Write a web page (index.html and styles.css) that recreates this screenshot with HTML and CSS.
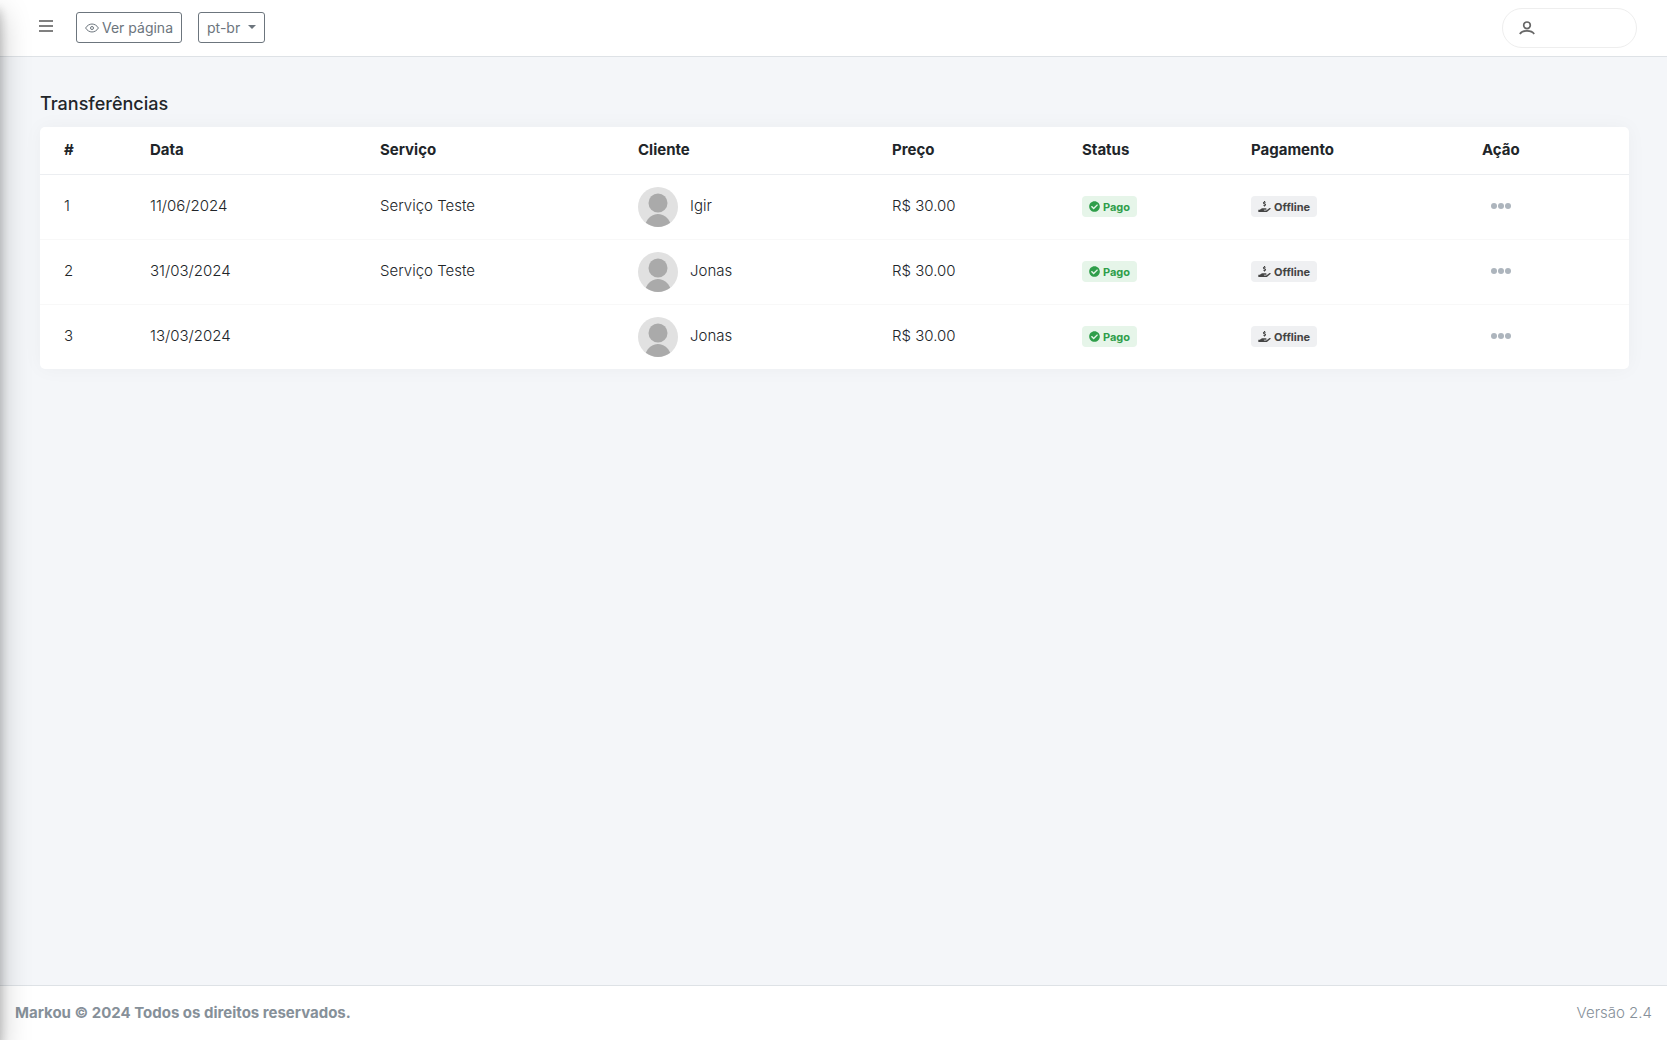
FILE: index.html
```
<!DOCTYPE html>
<html lang="pt-br">
<head>
<meta charset="utf-8">
<meta name="viewport" content="width=device-width, initial-scale=1">
<title>Transferências</title>
<link rel="stylesheet" href="styles.css">
</head>
<body>
<svg class="sprite" aria-hidden="true">
  <symbol id="avatar" viewBox="0 0 40 40">
    <circle cx="20" cy="20" r="20" fill="#e1e1e1"/>
    <circle cx="20" cy="16" r="9.5" fill="#aaa"/>
    <path d="M7.8 35.8C10 30.500 14.500 27 20 27s10 3.500 12.200 8.800A20 20 0 0 1 7.800 35.800z" fill="#aaa"/>
  </symbol>
  <symbol id="check" viewBox="0 0 512 512">
    <path fill="currentColor" d="M504 256c0 137-111 248-248 248S8 393 8 256 119 8 256 8s248 111 248 248zM227.300 387.300l184-184c6.200-6.200 6.200-16.400 0-22.600l-22.600-22.600c-6.200-6.200-16.400-6.200-22.600 0L216 308.100l-70.100-70.100c-6.200-6.200-16.400-6.200-22.600 0l-22.600 22.600c-6.200 6.200-6.200 16.400 0 22.600l104 104c6.200 6.300 16.400 6.300 22.600.1z"/>
  </symbol>
  <symbol id="hand" viewBox="0 0 576 512">
    <path fill="currentColor" d="M257.600 144.300l50 14.300c3.600 1 6.100 4.400 6.100 8.100 0 4.600-3.800 8.400-8.400 8.400h-32.800c-3.600 0-7.100-.8-10.300-2.200-4.800-2.200-10.400-1.700-14.100 2l-17.500 17.500c-5.300 5.300-4.700 14.300 1.500 18.400 9.500 6.300 20.400 10.100 31.800 11.500V240c0 8.800 7.200 16 16 16h16c8.800 0 16-7.200 16-16v-17.600c30.300-3.600 53.300-31 49.300-63-2.900-23-20.700-41.300-42.900-47.700l-50-14.300c-3.600-1-6.100-4.400-6.100-8.100 0-4.600 3.800-8.400 8.400-8.400h32.800c3.600 0 7.100.8 10.300 2.200 4.800 2.200 10.400 1.700 14.100-2l17.500-17.500c5.300-5.300 4.700-14.300-1.500-18.400-9.500-6.300-20.400-10.100-31.800-11.500V16c0-8.800-7.200-16-16-16h-16c-8.800 0-16 7.200-16 16v17.600c-30.300 3.600-53.300 31-49.300 63 2.900 23 20.700 41.300 42.900 47.700zm307.700 184.200c-12.200-10.900-30.900-10-43.700.1L402.800 423.700c-11.400 9.100-25.500 14-40 14H272c-8.800 0-16-7.200-16-16s7.200-16 16-16h78.300c15.900 0 30.700-10.900 33.300-26.600 3.300-20-12.100-37.400-31.600-37.400H192c-27 0-53.100 9.300-74.100 26.300L71.400 405.700H16c-8.800 0-16 7.200-16 16v74.300c0 8.800 7.200 16 16 16h356.800c14.500 0 28.600-4.900 40-14L564 376.900c15.100-12.200 16.500-35.300 1.300-48.400z"/>
  </symbol>
  <symbol id="dots" viewBox="0 0 20 6">
    <g fill="currentColor"><circle cx="3" cy="3" r="3"/><circle cx="10" cy="3" r="3"/><circle cx="17" cy="3" r="3"/></g>
  </symbol>
</svg>

<aside class="sidebar" aria-hidden="true"></aside>

<header class="topbar">
  <button class="menu-toggle" type="button" aria-label="Menu">
    <svg class="icon-menu" viewBox="0 0 14 12"><path d="M0 1h14M0 6h14M0 11h14" stroke="currentColor" stroke-width="2"/></svg>
  </button>
  <a class="btn" href="#">
    <svg class="icon-eye" viewBox="0 0 14 10" fill="none" stroke="currentColor" stroke-width="1"><path d="M.6 5C3.800-.3 10.200-.3 13.400 5 10.200 10.300 3.800 10.300.6 5z"/><circle cx="7" cy="5" r="1.500"/></svg>
    Ver página
  </a>
  <button class="btn btn-drop" type="button" aria-haspopup="true">pt-br <span class="caret"></span></button>
  <button class="user" type="button" aria-label="Usuário">
    <svg class="icon-user" viewBox="0 0 16 14" fill="none" stroke="currentColor" stroke-width="1.700"><circle cx="8" cy="4.300" r="3.300"/><path d="M.8 12.900C3.500 8.900 12.500 8.900 15.200 12.900"/></svg>
  </button>
</header>

<main class="content">
  <h1 class="title">Transferências</h1>
  <div class="card">
    <table class="table">
      <colgroup>
        <col class="col-id"><col class="col-date"><col class="col-service"><col class="col-client"><col class="col-price"><col class="col-status"><col class="col-payment"><col class="col-action">
      </colgroup>
      <thead>
        <tr><th>#</th><th>Data</th><th>Serviço</th><th>Cliente</th><th>Preço</th><th>Status</th><th>Pagamento</th><th>Ação</th></tr>
      </thead>
      <tbody>
        <tr>
          <td>1</td><td>11/06/2024</td><td>Serviço Teste</td>
          <td><div class="client"><svg class="avatar"><use href="#avatar"/></svg><span>Igir</span></div></td>
          <td>R$ 30.00</td>
          <td><span class="badge badge-paid"><svg class="icon-check"><use href="#check"/></svg>Pago</span></td>
          <td><span class="badge badge-offline"><svg class="icon-hand"><use href="#hand"/></svg>Offline</span></td>
          <td><button class="more" type="button" aria-label="Ações"><svg class="icon-dots"><use href="#dots"/></svg></button></td>
        </tr>
        <tr>
          <td>2</td><td>31/03/2024</td><td>Serviço Teste</td>
          <td><div class="client"><svg class="avatar"><use href="#avatar"/></svg><span>Jonas</span></div></td>
          <td>R$ 30.00</td>
          <td><span class="badge badge-paid"><svg class="icon-check"><use href="#check"/></svg>Pago</span></td>
          <td><span class="badge badge-offline"><svg class="icon-hand"><use href="#hand"/></svg>Offline</span></td>
          <td><button class="more" type="button" aria-label="Ações"><svg class="icon-dots"><use href="#dots"/></svg></button></td>
        </tr>
        <tr>
          <td>3</td><td>13/03/2024</td><td></td>
          <td><div class="client"><svg class="avatar"><use href="#avatar"/></svg><span>Jonas</span></div></td>
          <td>R$ 30.00</td>
          <td><span class="badge badge-paid"><svg class="icon-check"><use href="#check"/></svg>Pago</span></td>
          <td><span class="badge badge-offline"><svg class="icon-hand"><use href="#hand"/></svg>Offline</span></td>
          <td><button class="more" type="button" aria-label="Ações"><svg class="icon-dots"><use href="#dots"/></svg></button></td>
        </tr>
      </tbody>
    </table>
  </div>
</main>

<footer class="footer">
  <strong>Markou © 2024 Todos os direitos reservados.</strong>
  <span>Versão 2.4</span>
</footer>
</body>
</html>
```
FILE: styles.css
```
*, *::before, *::after { box-sizing: border-box; }

body {
  margin: 0;
  min-height: 100vh;
  display: flex;
  flex-direction: column;
  background: #f4f6f9;
  color: #212529;
  font-family: Inter, "Liberation Sans", sans-serif;
  font-size: 15px;
  line-height: 24px;
}

button { font: inherit; cursor: pointer; }
svg { display: block; flex: none; }
.sprite { position: absolute; width: 0; height: 0; }

/* Off-canvas sidebar: only its shadow reaches the page while collapsed */
.sidebar {
  position: fixed;
  top: 0;
  bottom: 0;
  left: -250px;
  width: 250px;
  z-index: 10;
  box-shadow: 0 14px 28px rgba(0, 0, 0, .25), 0 10px 10px rgba(0, 0, 0, .22);
}

.topbar {
  display: flex;
  align-items: center;
  gap: 16px;
  height: 57px;
  padding: 0 30px 0 31px;
  background: #fff;
  border-bottom: 1px solid #dee2e6;
}

.menu-toggle {
  padding: 6px 7px 10px 8px;
  margin: 0;
  border: 0;
  background: none;
  color: #808080;
}
.icon-menu { width: 14px; height: 12px; }

.btn {
  display: flex;
  align-items: center;
  gap: 3px;
  height: 31px;
  margin-bottom: 1px;
  padding: 0 8px;
  border: 1px solid #6c757d;
  border-radius: 3px;
  background: #fff;
  color: #6c757d;
  font-size: 14px;
  font-weight: 400;
  text-decoration: none;
}
.btn-drop { gap: 8px; }
.icon-eye { width: 14px; height: 10px; }
.caret {
  margin-bottom: 2px;
  border-top: 4px solid;
  border-left: 4px solid transparent;
  border-right: 4px solid transparent;
}

.user {
  display: flex;
  align-items: center;
  width: 135px;
  height: 40px;
  margin-left: auto;
  padding: 0 16px;
  border: 1px solid #eee;
  border-radius: 20px;
  background: #fff;
  color: #666;
}
.icon-user { width: 16px; height: 14px; }

.content { flex: 1; padding: 35px 38px 32px 40px; }
.title {
  margin: 0 0 11px;
  font-size: 18px;
  font-weight: 500;
  line-height: 24px;
}

.card {
  background: #fff;
  border-radius: 5px;
  box-shadow: 0 0 20px rgba(0, 0, 0, .04);
}

.table {
  width: 100%;
  table-layout: fixed;
  border-collapse: separate;
  border-spacing: 0;
}
.col-id { width: 98px; }
.col-date { width: 230px; }
.col-service { width: 258px; }
.col-client { width: 254px; }
.col-price { width: 190px; }
.col-status { width: 169px; }
.col-payment { width: 231px; }
.col-action { width: 159px; }

.table th {
  padding: 11px 12px 12px;
  border-bottom: 1px solid #eceef1;
  font-weight: 700;
  text-align: left;
}
.table td {
  height: 65px;
  padding: 12px 12px 0;
  border-bottom: 1px solid #f8f8f8;
  font-weight: 300;
  line-height: 38px;
  vertical-align: top;
}
.table tbody tr:last-child td { border-bottom: 0; height: 64px; }
.table th:first-child, .table td:first-child { padding-left: 24px; }

.client { display: flex; gap: 12px; }
.avatar { width: 40px; height: 40px; }

.badge {
  display: inline-flex;
  align-items: center;
  gap: 3px;
  height: 21px;
  padding: 0 7px;
  border-radius: 4px;
  font-size: 11px;
  font-weight: 700;
  vertical-align: middle;
}
.badge-paid { background: #e6f5e9; color: #2f9e4a; }
.badge-offline { background: #eff0f2; color: #444; }
.icon-check { width: 11px; height: 11px; }
.icon-hand { width: 13px; height: 11px; }

.more {
  display: block;
  padding: 16px 9px;
  border: 0;
  background: none;
  color: #adb5bd;
}
.icon-dots { width: 20px; height: 6px; }

.footer {
  display: flex;
  justify-content: space-between;
  padding: 15px;
  background: #fff;
  border-top: 1px solid #dee2e6;
  color: #869099;
  font-weight: 300;
}
.footer strong { font-weight: 700; }
```
